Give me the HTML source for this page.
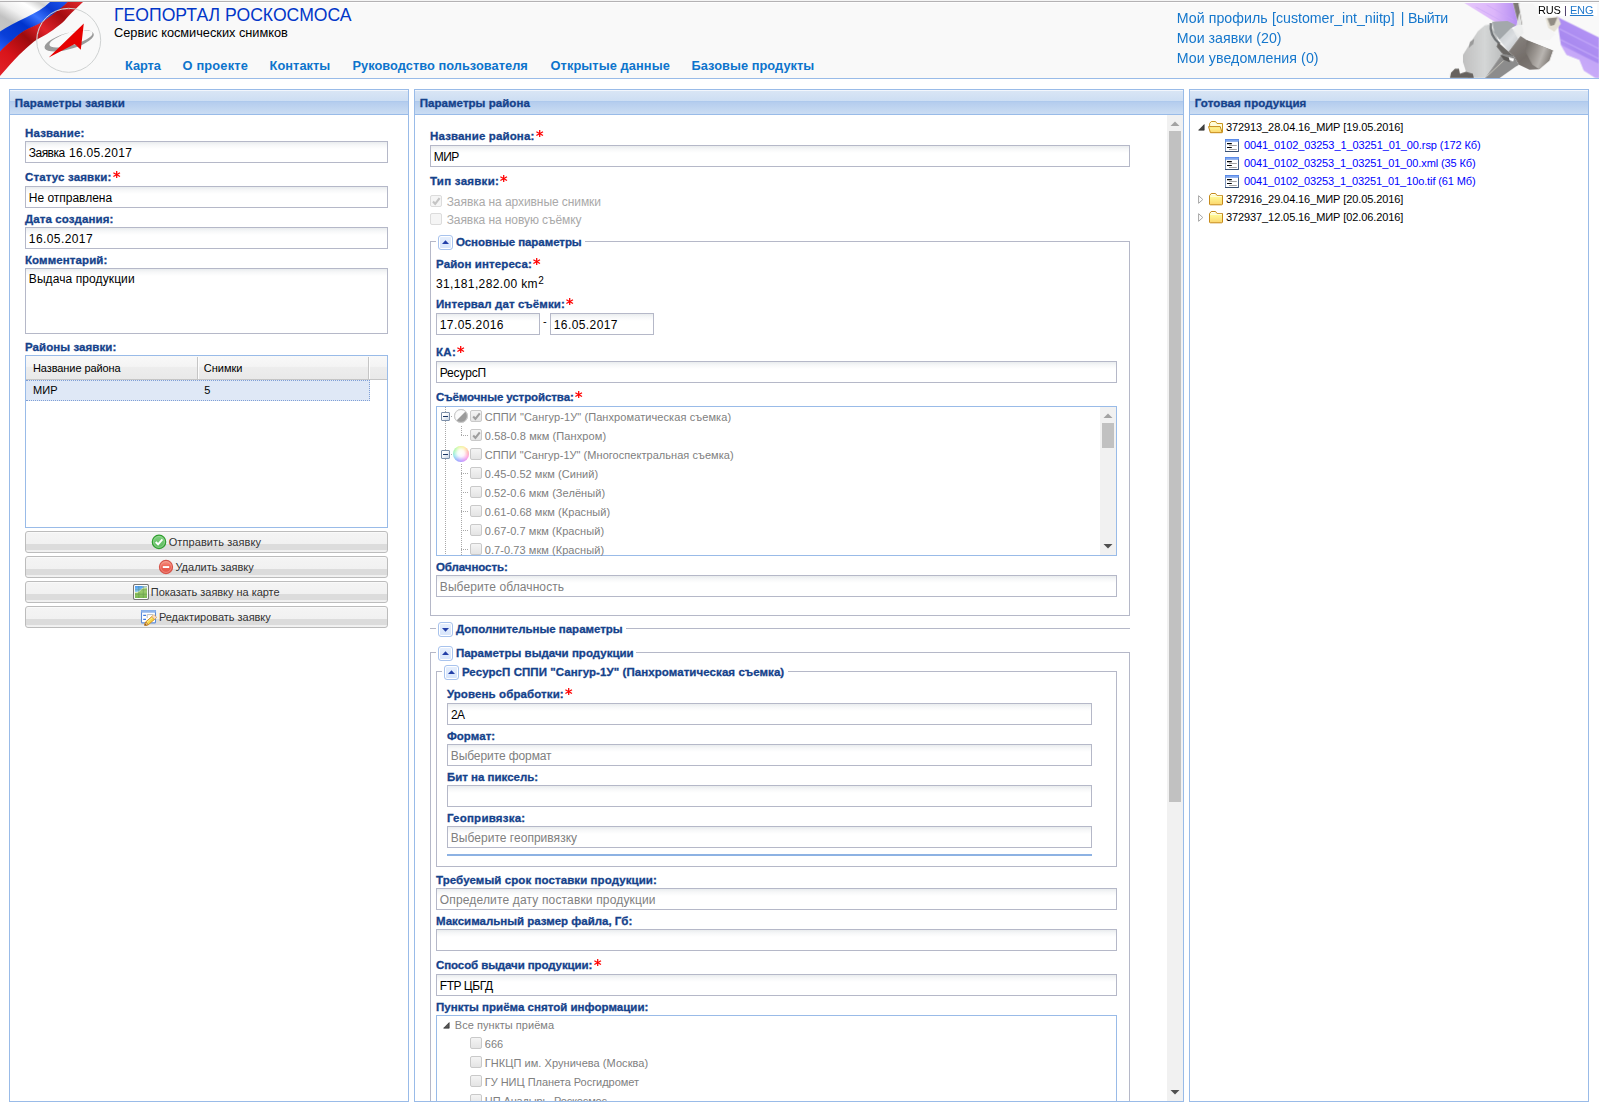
<!DOCTYPE html>
<html><head><meta charset="utf-8"><title>Геопортал Роскосмоса</title>
<style>
html,body{margin:0;padding:0;background:#fff;overflow:hidden}
body{width:1599px;height:1112px;position:relative;font-family:'Liberation Sans', sans-serif;}
div,svg{box-sizing:border-box}
.in{position:absolute;height:22px;border:1px solid #b5b8c8;background:linear-gradient(#e9ecee 0,#f6f7f8 3px,#fff 7px)}
.hd{position:absolute;height:25px;border:1px solid #99bbe8;border-bottom:none;background:linear-gradient(#dae6f5 0,#cddef3 45%,#abc7ec 46%,#b5cdee 52%,#cbddf3 100%);box-shadow:inset 0 1px 0 #f2f6fc}
.bd{position:absolute;border:1px solid #99bbe8;background:#fff}
.btn{position:absolute;height:22px;width:363px;left:25px;border:1px solid #bcbcbc;border-radius:3px;background:linear-gradient(#fafafa 0,#fafafa 1px,#f4f4f4 1px,#f1f1f1 12px,#dcdcdc 12px,#dcdcdc 18px,#efefef 18px,#f2f2f2 20px)}
.cb{position:absolute;width:12px;height:12px;border:1px solid #c9c9c9;border-radius:2px;background:linear-gradient(#f4f4f4,#e4e4e4)}
.tg{position:absolute;width:15px;height:15px;border:1px solid #a8c3ed;border-radius:3px;background:linear-gradient(#e6effd,#d7e5fb);box-shadow:inset 0 0 0 1px #fff}
</style></head><body>
<div style="position:absolute;left:0px;top:0px;width:1599px;height:78px;background:#f9f9f9"></div>
<div style="position:absolute;left:0px;top:0px;width:1599px;height:1px;background:#f5f5f5"></div>
<div style="position:absolute;left:0px;top:1px;width:1599px;height:1px;background:#b4b2b4"></div>
<div style="position:absolute;left:0px;top:2px;width:1599px;height:1px;background:#fefefe"></div>
<div style="position:absolute;left:0px;top:78px;width:1599px;height:1px;background:#99bbe8"></div>
<svg style="position:absolute;left:0;top:2px" width="112" height="76" viewBox="0 2 112 76">
<defs>
<linearGradient id="gw" x1="0" y1="1" x2="1" y2="0"><stop offset="0" stop-color="#c6c6c6"/><stop offset=".28" stop-color="#c2c2c2"/><stop offset=".5" stop-color="#f0f0f0"/><stop offset=".72" stop-color="#ffffff"/><stop offset=".88" stop-color="#d2d2d2"/><stop offset="1" stop-color="#ececec"/></linearGradient>
<linearGradient id="gb" x1="0" y1="1" x2="1" y2="0"><stop offset="0" stop-color="#2b62ff"/><stop offset=".2" stop-color="#0a3fd8"/><stop offset=".45" stop-color="#0033cc"/><stop offset=".62" stop-color="#3a74ff"/><stop offset=".8" stop-color="#0a3ad0"/><stop offset="1" stop-color="#1c55f0"/></linearGradient>
<linearGradient id="gr" x1="0" y1="1" x2="1" y2="0"><stop offset="0" stop-color="#e3222a"/><stop offset=".2" stop-color="#d8141a"/><stop offset=".42" stop-color="#9c0b0d"/><stop offset=".58" stop-color="#e0232a"/><stop offset=".78" stop-color="#a40c10"/><stop offset="1" stop-color="#e2262c"/></linearGradient>
<clipPath id="cc"><circle cx="68.7" cy="40.3" r="31.5"/></clipPath>
</defs>
<path d="M0,2 L50,2 C44,8 36,13 26,18 C16,23 7,27 0,32 Z" fill="url(#gw)"/>
<path d="M0,31.5 C7,26.5 16,22.5 26,17.5 C36,12.5 44,8 50,2 L68,2 C64,6 60,9.5 55,13 C50,17 45,21 40,23.7 C32,27.5 25,30 20,34 C15,38 10,42.5 6.5,45.5 C4,47.8 2,50 0,52 Z" fill="url(#gb)"/>
<path d="M0,51.5 C2,49.5 4,47.3 6.5,45 C10,42 15,37.5 20,33.5 C25,29.5 32,27 40,23.2 C45,20.5 50,16.5 55,12.5 C60,9 64,5.5 67.5,2 L83,2 C78,7 73,11 69,15.5 C66,19 63,22.5 59.5,25 C55,28.5 51,31.5 47,34 C42,37 38,38.5 34,41.5 C29,45.5 24,50 19,55 C13,61 7,68 0,76 Z" fill="url(#gr)"/>
<g clip-path="url(#cc)" opacity=".55"><path d="M36.5,44 C36,20 52,7 70,8.5" fill="none" stroke="#fff" stroke-width="1.6"/></g>
<circle cx="68.7" cy="40.3" r="32" fill="none" stroke="#cfd2d2" stroke-width="1"/>
<g transform="rotate(-16 68.7 40.3)">
<path d="M43.5,41.5 A25.5,8.2 0 1 0 94.5,40.5 A25.5,8.2 0 1 0 43.5,41.5 Z M49,39.2 A22.3,6.4 0 1 1 93.6,39.8 A22.3,6.4 0 1 1 49,39.2 Z" fill="#9a9a9a" fill-rule="evenodd"/>
</g>
<path d="M83.8,23.5 L80.8,49.8 L74.8,43.9 L48.7,57.4 Z" fill="#e60000"/>
</svg>
<div class="hd" style="left:9px;top:89px;width:400px"></div>
<div class="bd" style="left:9px;top:114px;width:400px;height:988px"></div>
<div class="hd" style="left:414px;top:89px;width:770px"></div>
<div class="bd" style="left:414px;top:114px;width:770px;height:988px"></div>
<div class="hd" style="left:1189px;top:89px;width:400px"></div>
<div class="bd" style="left:1189px;top:114px;width:400px;height:988px"></div>
<div class="in" style="left:25px;top:141px;width:363px;height:22px"></div>
<svg style="position:absolute;left:111.8px;top:169.8px" width="10" height="10" viewBox="111.8 169.8 10 10"><g stroke="#f00" stroke-width="1.25" stroke-linecap="butt"><line x1="116.5" y1="170.8" x2="116.5" y2="177.9"/><line x1="113.2" y1="172.5" x2="119.8" y2="176.3"/><line x1="113.2" y1="176.3" x2="119.8" y2="172.5"/></g></svg>
<div class="in" style="left:25px;top:186px;width:363px;height:22px"></div>
<div class="in" style="left:25px;top:227px;width:363px;height:22px"></div>
<div class="in" style="left:25px;top:268px;width:363px;height:66px"></div>
<div style="position:absolute;left:25px;top:355px;width:363px;height:173px;border:1px solid #99bbe8;background:#fff"></div>
<div style="position:absolute;left:26px;top:356px;width:361px;height:24px;background:linear-gradient(#f9f9f9 0,#f4f4f4 45%,#ededed 50%,#e9e9e9 100%);border-bottom:1px solid #c5c5c5"></div>
<div style="position:absolute;left:197px;top:357px;width:1px;height:22px;background:#c5c5c5"></div>
<div style="position:absolute;left:198px;top:357px;width:1px;height:22px;background:#fdfdfd"></div>
<div style="position:absolute;left:368px;top:357px;width:1px;height:22px;background:#c5c5c5"></div>
<div style="position:absolute;left:369px;top:357px;width:1px;height:22px;background:#fdfdfd"></div>
<div style="position:absolute;left:26px;top:380px;width:344px;height:21px;background:#dfe8f6;border-top:1px dotted #7f9fd6;border-bottom:1px dotted #7f9fd6;border-right:1px dotted #7f9fd6"></div>
<div class="btn" style="top:531px"></div>
<div class="btn" style="top:556px"></div>
<div class="btn" style="top:581px"></div>
<div class="btn" style="top:606px"></div>
<svg style="position:absolute;left:534.8px;top:128.8px" width="10" height="10" viewBox="534.8 128.8 10 10"><g stroke="#f00" stroke-width="1.25" stroke-linecap="butt"><line x1="539.5" y1="129.8" x2="539.5" y2="136.9"/><line x1="536.1999999999999" y1="131.5" x2="542.8" y2="135.3"/><line x1="536.1999999999999" y1="135.3" x2="542.8" y2="131.5"/></g></svg>
<div class="in" style="left:430px;top:145px;width:700px;height:22px"></div>
<svg style="position:absolute;left:499.3px;top:173.8px" width="10" height="10" viewBox="499.3 173.8 10 10"><g stroke="#f00" stroke-width="1.25" stroke-linecap="butt"><line x1="504.0" y1="174.8" x2="504.0" y2="181.9"/><line x1="500.7" y1="176.5" x2="507.3" y2="180.3"/><line x1="500.7" y1="180.3" x2="507.3" y2="176.5"/></g></svg>
<div class="cb" style="left:430px;top:195px;border-color:#dcdcdc;background:#f5f5f5"></div>
<svg style="position:absolute;left:432px;top:197px" width="9" height="9" viewBox="0 0 9 9"><path d="M1.0,4.6 L3.2,6.9 L7.6,1.2" fill="none" stroke="#c4c4c4" stroke-width="2.2"/></svg>
<div class="cb" style="left:430px;top:213px;border-color:#dcdcdc;background:#f5f5f5"></div>
<div style="position:absolute;left:430px;top:241px;width:700px;height:375px;border:1px solid #b5b8c8"></div>
<div style="position:absolute;left:436px;top:239px;width:149px;height:5px;background:#fff"></div>
<div class="tg" style="left:438px;top:235px"></div>
<svg style="position:absolute;left:442px;top:240px" width="7" height="4" viewBox="0 0 7 4"><path d="M0,4 L3.5,0.2 L7,4 Z" fill="#2340a8"/></svg>
<svg style="position:absolute;left:532.3px;top:256.8px" width="10" height="10" viewBox="532.3 256.8 10 10"><g stroke="#f00" stroke-width="1.25" stroke-linecap="butt"><line x1="537.0" y1="257.8" x2="537.0" y2="264.90000000000003"/><line x1="533.6999999999999" y1="259.50000000000006" x2="540.3" y2="263.3"/><line x1="533.6999999999999" y1="263.3" x2="540.3" y2="259.50000000000006"/></g></svg>
<svg style="position:absolute;left:565.3px;top:296.8px" width="10" height="10" viewBox="565.3 296.8 10 10"><g stroke="#f00" stroke-width="1.25" stroke-linecap="butt"><line x1="570.0" y1="297.8" x2="570.0" y2="304.90000000000003"/><line x1="566.6999999999999" y1="299.50000000000006" x2="573.3" y2="303.3"/><line x1="566.6999999999999" y1="303.3" x2="573.3" y2="299.50000000000006"/></g></svg>
<div class="in" style="left:436px;top:313px;width:104px;height:22px"></div>
<div class="in" style="left:550px;top:313px;width:104px;height:22px"></div>
<svg style="position:absolute;left:456.3px;top:344.8px" width="10" height="10" viewBox="456.3 344.8 10 10"><g stroke="#f00" stroke-width="1.25" stroke-linecap="butt"><line x1="461.0" y1="345.8" x2="461.0" y2="352.90000000000003"/><line x1="457.7" y1="347.50000000000006" x2="464.3" y2="351.3"/><line x1="457.7" y1="351.3" x2="464.3" y2="347.50000000000006"/></g></svg>
<div class="in" style="left:436px;top:361px;width:681px;height:22px"></div>
<svg style="position:absolute;left:574.3px;top:389.8px" width="10" height="10" viewBox="574.3 389.8 10 10"><g stroke="#f00" stroke-width="1.25" stroke-linecap="butt"><line x1="579.0" y1="390.8" x2="579.0" y2="397.90000000000003"/><line x1="575.6999999999999" y1="392.50000000000006" x2="582.3" y2="396.3"/><line x1="575.6999999999999" y1="396.3" x2="582.3" y2="392.50000000000006"/></g></svg>
<div style="position:absolute;left:436px;top:406px;width:681px;height:150px;border:1px solid #99bbe8;background:#fff"></div>
<div style="position:absolute;left:445px;top:407px;width:1px;height:148px;background:repeating-linear-gradient(to bottom,#a8a8a8 0,#a8a8a8 1px,transparent 1px,transparent 2px)"></div>
<div style="position:absolute;left:441px;top:412px;width:9px;height:9px;border:1px solid #7c8fa9;border-radius:1px;background:linear-gradient(135deg,#fff 30%,#c9d6e6)"></div>
<div style="position:absolute;left:443px;top:416px;width:5px;height:1px;background:#1c3664"></div>
<div style="position:absolute;left:451px;top:416px;width:2px;height:1px;background:repeating-linear-gradient(to right,#a8a8a8 0,#a8a8a8 1px,transparent 1px,transparent 2px)"></div>
<svg style="position:absolute;left:453px;top:408px" width="16" height="16" viewBox="0 0 16 16"><defs><clipPath id="pc"><circle cx="8" cy="8" r="6.3"/></clipPath></defs><circle cx="8" cy="8" r="6.6" fill="#fbfbfb" stroke="#c4c4c4" stroke-width="1"/><path d="M14.5,1.5 L14.5,14.5 L1.5,14.5 Z" fill="#9b9b9b" clip-path="url(#pc)"/><circle cx="8" cy="8" r="6.4" fill="none" stroke="#d2d2d2" stroke-width=".8"/></svg>
<div class="cb" style="left:470px;top:410px"></div>
<svg style="position:absolute;left:472px;top:412px" width="9" height="9" viewBox="0 0 9 9"><path d="M1.2,4.6 L3.4,6.9 L7.8,1.4" fill="none" stroke="#9e9e9e" stroke-width="2.1"/></svg>
<div style="position:absolute;left:461px;top:426px;width:1px;height:10px;background:repeating-linear-gradient(to bottom,#a8a8a8 0,#a8a8a8 1px,transparent 1px,transparent 2px)"></div>
<div style="position:absolute;left:461px;top:435px;width:7px;height:1px;background:repeating-linear-gradient(to right,#a8a8a8 0,#a8a8a8 1px,transparent 1px,transparent 2px)"></div>
<div class="cb" style="left:470px;top:429px"></div>
<svg style="position:absolute;left:472px;top:431px" width="9" height="9" viewBox="0 0 9 9"><path d="M1.2,4.6 L3.4,6.9 L7.8,1.4" fill="none" stroke="#9e9e9e" stroke-width="2.1"/></svg>
<div style="position:absolute;left:441px;top:450px;width:9px;height:9px;border:1px solid #7c8fa9;border-radius:1px;background:linear-gradient(135deg,#fff 30%,#c9d6e6)"></div>
<div style="position:absolute;left:443px;top:454px;width:5px;height:1px;background:#1c3664"></div>
<div style="position:absolute;left:451px;top:454px;width:2px;height:1px;background:repeating-linear-gradient(to right,#a8a8a8 0,#a8a8a8 1px,transparent 1px,transparent 2px)"></div>
<div style="position:absolute;left:453px;top:446px;width:16px;height:16px;border-radius:50%;background:conic-gradient(from 30deg,#ffe27a,#ff9a9a,#ff8fe0,#c08bff,#8fa0ff,#7fe0e8,#8ff59a,#d9f57a,#ffe27a)"></div>
<div style="position:absolute;left:453px;top:446px;width:16px;height:16px;border-radius:50%;background:radial-gradient(circle at 50% 45%,#fff 0,rgba(255,255,255,.9) 28%,rgba(255,255,255,.25) 62%,rgba(255,255,255,0) 78%)"></div>
<div class="cb" style="left:470px;top:448px"></div>
<div style="position:absolute;left:461px;top:464px;width:1px;height:91px;background:repeating-linear-gradient(to bottom,#a8a8a8 0,#a8a8a8 1px,transparent 1px,transparent 2px)"></div>
<div style="position:absolute;left:461px;top:473px;width:7px;height:1px;background:repeating-linear-gradient(to right,#a8a8a8 0,#a8a8a8 1px,transparent 1px,transparent 2px)"></div>
<div class="cb" style="left:470px;top:467px"></div>
<div style="position:absolute;left:461px;top:492px;width:7px;height:1px;background:repeating-linear-gradient(to right,#a8a8a8 0,#a8a8a8 1px,transparent 1px,transparent 2px)"></div>
<div class="cb" style="left:470px;top:486px"></div>
<div style="position:absolute;left:461px;top:511px;width:7px;height:1px;background:repeating-linear-gradient(to right,#a8a8a8 0,#a8a8a8 1px,transparent 1px,transparent 2px)"></div>
<div class="cb" style="left:470px;top:505px"></div>
<div style="position:absolute;left:461px;top:530px;width:7px;height:1px;background:repeating-linear-gradient(to right,#a8a8a8 0,#a8a8a8 1px,transparent 1px,transparent 2px)"></div>
<div class="cb" style="left:470px;top:524px"></div>
<div style="position:absolute;left:461px;top:549px;width:7px;height:1px;background:repeating-linear-gradient(to right,#a8a8a8 0,#a8a8a8 1px,transparent 1px,transparent 2px)"></div>
<div class="cb" style="left:470px;top:543px"></div>
<div style="position:absolute;left:437px;top:555px;width:663px;height:1px;background:#99bbe8"></div>
<div style="position:absolute;left:437px;top:556px;width:663px;height:8px;background:#fff"></div>
<div style="position:absolute;left:1100px;top:407px;width:16px;height:148px;background:#f1f1f1"></div>
<div style="position:absolute;left:1102px;top:423px;width:12px;height:25px;background:#c1c1c1"></div>
<svg style="position:absolute;left:1103px;top:413px" width="10" height="6" viewBox="0 0 10 6"><path d="M0.5,5 L5,0.5 L9.5,5 Z" fill="#a3a3a3"/></svg>
<svg style="position:absolute;left:1103px;top:543px" width="10" height="6" viewBox="0 0 10 6"><path d="M0.5,1 L9.5,1 L5,5.5 Z" fill="#505050"/></svg>
<div class="in" style="left:436px;top:575px;width:681px;height:22px"></div>
<div style="position:absolute;left:430px;top:628px;width:700px;height:1px;background:#b5b8c8"></div>
<div style="position:absolute;left:436px;top:626px;width:190px;height:5px;background:#fff"></div>
<div class="tg" style="left:438px;top:622px"></div>
<svg style="position:absolute;left:442px;top:628px" width="7" height="4" viewBox="0 0 7 4"><path d="M0,0 L7,0 L3.5,3.8 Z" fill="#2340a8"/></svg>
<div style="position:absolute;left:430px;top:652px;width:700px;height:460px;border:1px solid #b5b8c8;border-bottom:none"></div>
<div style="position:absolute;left:436px;top:650px;width:200px;height:5px;background:#fff"></div>
<div class="tg" style="left:438px;top:646px"></div>
<svg style="position:absolute;left:442px;top:651px" width="7" height="4" viewBox="0 0 7 4"><path d="M0,4 L3.5,0.2 L7,4 Z" fill="#2340a8"/></svg>
<div style="position:absolute;left:436px;top:671px;width:681px;height:196px;border:1px solid #b5b8c8"></div>
<div style="position:absolute;left:442px;top:669px;width:346px;height:5px;background:#fff"></div>
<div class="tg" style="left:444px;top:665px"></div>
<svg style="position:absolute;left:448px;top:670px" width="7" height="4" viewBox="0 0 7 4"><path d="M0,4 L3.5,0.2 L7,4 Z" fill="#2340a8"/></svg>
<svg style="position:absolute;left:564.1999999999999px;top:686.8px" width="10" height="10" viewBox="564.1999999999999 686.8 10 10"><g stroke="#f00" stroke-width="1.25" stroke-linecap="butt"><line x1="568.9" y1="687.8" x2="568.9" y2="694.9"/><line x1="565.5999999999999" y1="689.5" x2="572.1999999999999" y2="693.3"/><line x1="565.5999999999999" y1="693.3" x2="572.1999999999999" y2="689.5"/></g></svg>
<div class="in" style="left:447px;top:703px;width:645px;height:22px"></div>
<div class="in" style="left:447px;top:744px;width:645px;height:22px"></div>
<div class="in" style="left:447px;top:785px;width:645px;height:22px"></div>
<div class="in" style="left:447px;top:826px;width:645px;height:22px"></div>
<div style="position:absolute;left:447px;top:854px;width:645px;height:2px;background:#8db2e3"></div>
<div class="in" style="left:436px;top:888px;width:681px;height:22px"></div>
<div class="in" style="left:436px;top:929px;width:681px;height:22px"></div>
<svg style="position:absolute;left:592.8px;top:957.8px" width="10" height="10" viewBox="592.8 957.8 10 10"><g stroke="#f00" stroke-width="1.25" stroke-linecap="butt"><line x1="597.5" y1="958.8" x2="597.5" y2="965.9"/><line x1="594.1999999999999" y1="960.5" x2="600.8" y2="964.3"/><line x1="594.1999999999999" y1="964.3" x2="600.8" y2="960.5"/></g></svg>
<div class="in" style="left:436px;top:974px;width:681px;height:22px"></div>
<div style="position:absolute;left:436px;top:1015px;width:681px;height:97px;border:1px solid #99bbe8;border-bottom:none;background:#fff"></div>
<svg style="position:absolute;left:443px;top:1022.3px" width="7" height="7" viewBox="0 0 7 7"><path d="M6.2,0.6 L6.2,6.2 L0.6,6.2 Z" fill="#555" stroke="#222" stroke-width=".6"/></svg>
<div class="cb" style="left:470px;top:1037px"></div>
<div class="cb" style="left:470px;top:1056px"></div>
<div class="cb" style="left:470px;top:1075px"></div>
<div class="cb" style="left:470px;top:1094px"></div>
<div style="position:absolute;left:1167px;top:115px;width:16px;height:986px;background:#f1f1f1"></div>
<div style="position:absolute;left:1169px;top:131px;width:12px;height:671px;background:#c1c1c1"></div>
<svg style="position:absolute;left:1170px;top:121px" width="10" height="6" viewBox="0 0 10 6"><path d="M0.5,5 L5,0.5 L9.5,5 Z" fill="#a3a3a3"/></svg>
<svg style="position:absolute;left:1170px;top:1089px" width="10" height="6" viewBox="0 0 10 6"><path d="M0.5,1 L9.5,1 L5,5.5 Z" fill="#505050"/></svg>
<svg style="position:absolute;left:1198px;top:123.5px" width="7" height="7" viewBox="0 0 7 7"><path d="M6.2,0.6 L6.2,6.2 L0.6,6.2 Z" fill="#444" stroke="#222" stroke-width=".6"/></svg>
<svg style="position:absolute;left:1208px;top:120.5px" width="16" height="13" viewBox="0 0 16 13"><defs><linearGradient id="fo" x1="0" y1="0" x2="0" y2="1"><stop offset="0" stop-color="#fffb98"/><stop offset="1" stop-color="#fcd56c"/></linearGradient></defs><path d="M1.6,5.6 L1.6,2.4 L3.3,0.5 L7.6,0.5 L9,2.5 L14.5,2.5 L14.5,11 L2.6,11" fill="#fffdd8" stroke="#c9961f" stroke-width="1"/><path d="M0.5,5.6 L12.2,5.6 L14.2,11.7 L2.4,11.7 Z" fill="url(#fo)" stroke="#c58a1b" stroke-width="1" stroke-linejoin="round"/></svg>
<svg style="position:absolute;left:1225px;top:139px" width="14" height="13" viewBox="0 0 14 13"><rect x="0.5" y="0.5" width="13" height="12" fill="#fff" stroke="#7f95bb"/><rect x="0" y="0" width="14" height="2.6" fill="#4f83e6"/><rect x="0.6" y="0.8" width="12.8" height="1" fill="#8db1f3"/><path d="M0,12.5 L14,12.5" stroke="#3b5273" stroke-width="1"/><path d="M13.5,2.6 L13.5,13" stroke="#4c6386" stroke-width="1"/><path d="M2,4.6 L6.8,4.6 M2,8.5 L6.8,8.5" stroke="#000" stroke-width="1.1"/><path d="M4,6.5 L11.8,6.5 M4,10.5 L11.8,10.5" stroke="#9a9a9a" stroke-width=".9"/></svg>
<svg style="position:absolute;left:1225px;top:157px" width="14" height="13" viewBox="0 0 14 13"><rect x="0.5" y="0.5" width="13" height="12" fill="#fff" stroke="#7f95bb"/><rect x="0" y="0" width="14" height="2.6" fill="#4f83e6"/><rect x="0.6" y="0.8" width="12.8" height="1" fill="#8db1f3"/><path d="M0,12.5 L14,12.5" stroke="#3b5273" stroke-width="1"/><path d="M13.5,2.6 L13.5,13" stroke="#4c6386" stroke-width="1"/><path d="M2,4.6 L6.8,4.6 M2,8.5 L6.8,8.5" stroke="#000" stroke-width="1.1"/><path d="M4,6.5 L11.8,6.5 M4,10.5 L11.8,10.5" stroke="#9a9a9a" stroke-width=".9"/></svg>
<svg style="position:absolute;left:1225px;top:175px" width="14" height="13" viewBox="0 0 14 13"><rect x="0.5" y="0.5" width="13" height="12" fill="#fff" stroke="#7f95bb"/><rect x="0" y="0" width="14" height="2.6" fill="#4f83e6"/><rect x="0.6" y="0.8" width="12.8" height="1" fill="#8db1f3"/><path d="M0,12.5 L14,12.5" stroke="#3b5273" stroke-width="1"/><path d="M13.5,2.6 L13.5,13" stroke="#4c6386" stroke-width="1"/><path d="M2,4.6 L6.8,4.6 M2,8.5 L6.8,8.5" stroke="#000" stroke-width="1.1"/><path d="M4,6.5 L11.8,6.5 M4,10.5 L11.8,10.5" stroke="#9a9a9a" stroke-width=".9"/></svg>
<svg style="position:absolute;left:1198px;top:195px" width="6" height="9" viewBox="0 0 6 9"><path d="M0.6,0.7 L4.8,4.5 L0.6,8.3 Z" fill="#fff" stroke="#a6a6a6" stroke-width="1"/></svg>
<svg style="position:absolute;left:1209px;top:192.5px" width="15" height="13" viewBox="0 0 15 13"><defs><linearGradient id="fg1209192.5" x1="0" y1="0" x2="0" y2="1"><stop offset="0" stop-color="#fffde0"/><stop offset=".25" stop-color="#fffb98"/><stop offset="1" stop-color="#fcd56c"/></linearGradient></defs><path d="M0.5,11 L0.5,2.6 L2.2,0.5 L6.6,0.5 L8,2.5 L13.5,2.5 L13.5,11 Q13.5,11.8 12.6,11.8 L1.4,11.8 Q0.5,11.8 0.5,11 Z" fill="url(#fg1209192.5)" stroke="#c58a1b" stroke-width="1"/><path d="M2.4,1.6 L6.2,1.6" stroke="#fff" stroke-width="1"/><path d="M1.2,3.3 L12.8,3.3" stroke="#fffef2" stroke-width=".9"/></svg>
<svg style="position:absolute;left:1198px;top:213px" width="6" height="9" viewBox="0 0 6 9"><path d="M0.6,0.7 L4.8,4.5 L0.6,8.3 Z" fill="#fff" stroke="#a6a6a6" stroke-width="1"/></svg>
<svg style="position:absolute;left:1209px;top:210.5px" width="15" height="13" viewBox="0 0 15 13"><defs><linearGradient id="fg1209210.5" x1="0" y1="0" x2="0" y2="1"><stop offset="0" stop-color="#fffde0"/><stop offset=".25" stop-color="#fffb98"/><stop offset="1" stop-color="#fcd56c"/></linearGradient></defs><path d="M0.5,11 L0.5,2.6 L2.2,0.5 L6.6,0.5 L8,2.5 L13.5,2.5 L13.5,11 Q13.5,11.8 12.6,11.8 L1.4,11.8 Q0.5,11.8 0.5,11 Z" fill="url(#fg1209210.5)" stroke="#c58a1b" stroke-width="1"/><path d="M2.4,1.6 L6.2,1.6" stroke="#fff" stroke-width="1"/><path d="M1.2,3.3 L12.8,3.3" stroke="#fffef2" stroke-width=".9"/></svg>
<svg style="position:absolute;left:1440px;top:0px" width="159" height="78" viewBox="0 0 1599 784" preserveAspectRatio="none">
<defs>
<linearGradient id="p1" x1="0" y1="0" x2="1" y2="0"><stop offset="0" stop-color="#e6c8fc"/><stop offset=".55" stop-color="#dcb6fa"/><stop offset="1" stop-color="#b38cf2"/></linearGradient>
<linearGradient id="p2" x1="0" y1="1" x2=".6" y2="0"><stop offset="0" stop-color="#dcbdfb"/><stop offset=".3" stop-color="#c3a3f8"/><stop offset=".55" stop-color="#a98af0"/><stop offset="1" stop-color="#b595f6"/></linearGradient>
<linearGradient id="b1" x1="0" y1="0" x2="1" y2="0"><stop offset="0" stop-color="#c0c0c0"/><stop offset=".55" stop-color="#d4d6d6"/><stop offset="1" stop-color="#bcbebe"/></linearGradient>
<linearGradient id="b2" x1="0" y1="0" x2="1" y2="1"><stop offset="0" stop-color="#8c8783"/><stop offset=".5" stop-color="#736d69"/><stop offset="1" stop-color="#8a8581"/></linearGradient>
<linearGradient id="b3" x1="0" y1="0" x2="1" y2=".4"><stop offset="0" stop-color="#6b6662"/><stop offset=".45" stop-color="#9b9691"/><stop offset=".7" stop-color="#b9b5b1"/><stop offset="1" stop-color="#827d78"/></linearGradient>
<linearGradient id="b4" x1="0" y1="0" x2="1" y2="1"><stop offset="0" stop-color="#bfc4c8"/><stop offset=".5" stop-color="#dcdfe2"/><stop offset="1" stop-color="#b9bdc1"/></linearGradient>
<filter id="bl" x="-5%" y="-5%" width="110%" height="110%"><feGaussianBlur stdDeviation="5"/></filter>
</defs>
<g filter="url(#bl)">
<path d="M245,30 L735,30 L790,250 L700,285 L545,215 L400,125 Z" fill="url(#p1)"/>
<path d="M360,70 L690,250 M470,50 L740,200" stroke="#c9a4f6" stroke-width="10" opacity=".6"/>
<path d="M1172,166 L1600,376 L1600,784 L1562,782 L1447,709 L1403,601 L1273,550 L1215,449 L1186,246 Z" fill="url(#p2)"/>
<path d="M1200,290 L1600,490 M1215,400 L1600,590" stroke="#c9b0fa" stroke-width="12" opacity=".8"/>
<path d="M1215,449 L1600,640 L1600,784 L1562,782 L1447,709 L1403,601 L1273,550 Z" fill="#ceb0fa" opacity=".75"/>
<path d="M450,255 L495,247 L560,332 L628,535 L455,784 L282,784 L231,624 L231,550 L322,402 L382,312 Z" fill="url(#b1)"/>
<path d="M300,420 L345,390 L335,440 L290,480 Z" fill="#8f8f8f" opacity=".8"/>
<path d="M525,218 L680,212 L760,250 L720,282 L600,402 L545,330 Z" fill="#a3a8ab"/>
<path d="M512,232 C500,320 545,395 600,440" fill="none" stroke="#6c7073" stroke-width="22"/>
<path d="M600,402 L720,282 L810,362 L690,520 Z" fill="url(#b4)"/>
<path d="M735,30 L800,30 L830,250 L790,250 Z" fill="#7d7975"/>
<path d="M788,32 L933,32 L1157,347 L1099,405 L870,400 L810,362 L830,250 Z" fill="#f5f5f5"/>
<path d="M800,120 L840,330 L790,400 L735,300 L770,250 Z" fill="#eceded" opacity=".9"/>
<path d="M690,520 L810,362 L875,405 L1135,507 L1100,600 L998,695 L900,700 L795,651 L740,560 Z" fill="url(#b2)"/>
<path d="M875,405 L1135,507 L1100,610 L998,695 L930,650 L860,520 Z" fill="url(#b3)"/>
<path d="M628,535 L740,560 L795,651 L760,672 L600,784 L455,784 Z" fill="#8c8c8c"/><path d="M585,425 L690,520 L745,565 L628,540 L570,470 Z" fill="#6a6765"/>
<path d="M607,550 L702,585 L702,625 L640,600 Z" fill="#5c5a58"/>
<path d="M470,770 L640,610" stroke="#d8d4c8" stroke-width="10" opacity=".8"/>
<path d="M1060,180 L1190,170 L1215,240 L1150,320 L1090,280 Z" fill="#e4e0d4"/>
<path d="M1080,185 L1180,175 L1150,250 L1110,260 Z" fill="#77726a" opacity=".75"/>
<path d="M100,784 L110,730 L150,690 L190,690 L200,740 L260,720 L330,740 L340,784 Z" fill="#66625e"/>
<path d="M690,575 L745,590 L735,618 L700,605 Z" fill="#fff"/>
</g>
</svg>
<div style="position:absolute;left:1538px;top:4px;width:59px;height:12px;background:#fff"></div>
<div style="position:absolute;left:114.0px;top:3.0px;white-space:pre;font:normal 17.6px/24px 'Liberation Sans', sans-serif;color:#0236c8;letter-spacing:0.014px;">ГЕОПОРТАЛ РОСКОСМОСА</div>
<div style="position:absolute;left:114.0px;top:24.0px;white-space:pre;font:normal 12.8px/18px 'Liberation Sans', sans-serif;color:#000;letter-spacing:-0.030px;">Сервис космических снимков</div>
<div style="position:absolute;left:125.0px;top:57.0px;white-space:pre;font:bold 12.8px/18px 'Liberation Sans', sans-serif;color:#0d74cc;letter-spacing:-0.081px;">Карта</div>
<div style="position:absolute;left:182.5px;top:57.0px;white-space:pre;font:bold 12.8px/18px 'Liberation Sans', sans-serif;color:#0d74cc;letter-spacing:0.190px;">О проекте</div>
<div style="position:absolute;left:269.5px;top:57.0px;white-space:pre;font:bold 12.8px/18px 'Liberation Sans', sans-serif;color:#0d74cc;letter-spacing:0.065px;">Контакты</div>
<div style="position:absolute;left:352.5px;top:57.0px;white-space:pre;font:bold 12.8px/18px 'Liberation Sans', sans-serif;color:#0d74cc;letter-spacing:0.042px;">Руководство пользователя</div>
<div style="position:absolute;left:550.5px;top:57.0px;white-space:pre;font:bold 12.8px/18px 'Liberation Sans', sans-serif;color:#0d74cc;letter-spacing:0.094px;">Открытые данные</div>
<div style="position:absolute;left:691.5px;top:57.0px;white-space:pre;font:bold 12.8px/18px 'Liberation Sans', sans-serif;color:#0d74cc;letter-spacing:0.053px;">Базовые продукты</div>
<div style="position:absolute;left:1176.8px;top:9.0px;white-space:pre;font:normal 14.2px/19px 'Liberation Sans', sans-serif;color:#1577cc;letter-spacing:0.043px;">Мой профиль</div>
<div style="position:absolute;left:1272.1px;top:9.0px;white-space:pre;font:normal 14.2px/19px 'Liberation Sans', sans-serif;color:#1577cc;letter-spacing:-0.023px;">[customer_int_niitp]</div>
<div style="position:absolute;left:1400.7px;top:9.0px;white-space:pre;font:normal 14.2px/19px 'Liberation Sans', sans-serif;color:#1577cc;">|</div>
<div style="position:absolute;left:1408.1px;top:9.0px;white-space:pre;font:normal 14.2px/19px 'Liberation Sans', sans-serif;color:#1577cc;letter-spacing:-0.454px;">Выйти</div>
<div style="position:absolute;left:1176.8px;top:29.0px;white-space:pre;font:normal 14.2px/19px 'Liberation Sans', sans-serif;color:#1577cc;letter-spacing:0.010px;">Мои заявки (20)</div>
<div style="position:absolute;left:1176.8px;top:49.0px;white-space:pre;font:normal 14.2px/19px 'Liberation Sans', sans-serif;color:#1577cc;letter-spacing:0.066px;">Мои уведомления (0)</div>
<div style="position:absolute;left:14.8px;top:95.0px;white-space:pre;font:bold 11.5px/16px 'Liberation Sans', sans-serif;color:#15428b;letter-spacing:0.195px;-webkit-text-stroke:0.3px #15428b;">Параметры заявки</div>
<div style="position:absolute;left:419.8px;top:95.0px;white-space:pre;font:bold 11.5px/16px 'Liberation Sans', sans-serif;color:#15428b;letter-spacing:0.042px;-webkit-text-stroke:0.3px #15428b;">Параметры района</div>
<div style="position:absolute;left:1194.8px;top:95.0px;white-space:pre;font:bold 11.5px/16px 'Liberation Sans', sans-serif;color:#15428b;letter-spacing:0.112px;-webkit-text-stroke:0.3px #15428b;">Готовая продукция</div>
<div style="position:absolute;left:25.0px;top:125.0px;white-space:pre;font:bold 11.5px/16px 'Liberation Sans', sans-serif;color:#15428b;letter-spacing:0.147px;-webkit-text-stroke:0.3px #15428b;">Название:</div>
<div style="position:absolute;left:28.8px;top:145.0px;white-space:pre;font:normal 12px/17px 'Liberation Sans', sans-serif;color:#000;letter-spacing:-0.537px;">Заявка</div>
<div style="position:absolute;left:68.9px;top:145.0px;white-space:pre;font:normal 12px/17px 'Liberation Sans', sans-serif;color:#000;letter-spacing:0.337px;">16.05.2017</div>
<div style="position:absolute;left:25.0px;top:169.0px;white-space:pre;font:bold 11.5px/16px 'Liberation Sans', sans-serif;color:#15428b;letter-spacing:0.149px;-webkit-text-stroke:0.3px #15428b;">Статус заявки:</div>
<div style="position:absolute;left:28.8px;top:190.0px;white-space:pre;font:normal 12px/17px 'Liberation Sans', sans-serif;color:#000;letter-spacing:-0.018px;">Не отправлена</div>
<div style="position:absolute;left:25.0px;top:211.0px;white-space:pre;font:bold 11.5px/16px 'Liberation Sans', sans-serif;color:#15428b;letter-spacing:0.095px;-webkit-text-stroke:0.3px #15428b;">Дата создания:</div>
<div style="position:absolute;left:28.8px;top:231.0px;white-space:pre;font:normal 12px/17px 'Liberation Sans', sans-serif;color:#000;letter-spacing:0.415px;">16.05.2017</div>
<div style="position:absolute;left:25.0px;top:252.0px;white-space:pre;font:bold 11.5px/16px 'Liberation Sans', sans-serif;color:#15428b;letter-spacing:0.093px;-webkit-text-stroke:0.3px #15428b;">Комментарий:</div>
<div style="position:absolute;left:28.8px;top:271.0px;white-space:pre;font:normal 12px/17px 'Liberation Sans', sans-serif;color:#000;letter-spacing:0.092px;">Выдача продукции</div>
<div style="position:absolute;left:25.0px;top:339.0px;white-space:pre;font:bold 11.5px/16px 'Liberation Sans', sans-serif;color:#15428b;letter-spacing:0.071px;-webkit-text-stroke:0.3px #15428b;">Районы заявки:</div>
<div style="position:absolute;left:32.9px;top:361.0px;white-space:pre;font:normal 11px/15px 'Liberation Sans', sans-serif;color:#000;letter-spacing:-0.079px;">Название района</div>
<div style="position:absolute;left:203.7px;top:361.0px;white-space:pre;font:normal 11px/15px 'Liberation Sans', sans-serif;color:#000;letter-spacing:0.022px;">Снимки</div>
<div style="position:absolute;left:32.9px;top:383.0px;white-space:pre;font:normal 11px/15px 'Liberation Sans', sans-serif;color:#000;letter-spacing:0.097px;">МИР</div>
<div style="position:absolute;left:204.2px;top:383.0px;white-space:pre;font:normal 11px/15px 'Liberation Sans', sans-serif;color:#000;">5</div>
<div style="position:absolute;left:168.7px;top:535.0px;white-space:pre;font:normal 11px/15px 'Liberation Sans', sans-serif;color:#333;letter-spacing:0.087px;">Отправить заявку</div>
<div style="position:absolute;left:175.5px;top:560.0px;white-space:pre;font:normal 11px/15px 'Liberation Sans', sans-serif;color:#333;letter-spacing:-0.012px;">Удалить заявку</div>
<div style="position:absolute;left:150.8px;top:585.0px;white-space:pre;font:normal 11px/15px 'Liberation Sans', sans-serif;color:#333;letter-spacing:-0.035px;">Показать заявку на карте</div>
<div style="position:absolute;left:158.9px;top:610.0px;white-space:pre;font:normal 11px/15px 'Liberation Sans', sans-serif;color:#333;letter-spacing:-0.029px;">Редактировать заявку</div>
<div style="position:absolute;left:430.0px;top:128.0px;white-space:pre;font:bold 11.5px/16px 'Liberation Sans', sans-serif;color:#15428b;letter-spacing:0.142px;-webkit-text-stroke:0.3px #15428b;">Название района:</div>
<div style="position:absolute;left:433.8px;top:149.0px;white-space:pre;font:normal 12px/17px 'Liberation Sans', sans-serif;color:#000;letter-spacing:-0.600px;">МИР</div>
<div style="position:absolute;left:430.0px;top:173.0px;white-space:pre;font:bold 11.5px/16px 'Liberation Sans', sans-serif;color:#15428b;letter-spacing:0.260px;-webkit-text-stroke:0.3px #15428b;">Тип заявки:</div>
<div style="position:absolute;left:446.7px;top:194.0px;white-space:pre;font:normal 12px/17px 'Liberation Sans', sans-serif;color:#a9a9a9;letter-spacing:-0.073px;">Заявка на архивные снимки</div>
<div style="position:absolute;left:446.7px;top:212.0px;white-space:pre;font:normal 12px/17px 'Liberation Sans', sans-serif;color:#a9a9a9;letter-spacing:-0.082px;">Заявка на новую съёмку</div>
<div style="position:absolute;left:455.9px;top:234.0px;white-space:pre;font:bold 11.5px/16px 'Liberation Sans', sans-serif;color:#15428b;letter-spacing:-0.055px;-webkit-text-stroke:0.3px #15428b;">Основные параметры</div>
<div style="position:absolute;left:436.0px;top:256.0px;white-space:pre;font:bold 11.5px/16px 'Liberation Sans', sans-serif;color:#15428b;letter-spacing:0.112px;-webkit-text-stroke:0.3px #15428b;">Район интереса:</div>
<div style="position:absolute;left:436.0px;top:276.0px;white-space:pre;font:normal 12px/17px 'Liberation Sans', sans-serif;color:#000;letter-spacing:0.368px;">31,181,282.00 km</div>
<div style="position:absolute;left:538.3px;top:274.0px;white-space:pre;font:normal 10px/14px 'Liberation Sans', sans-serif;color:#000;">2</div>
<div style="position:absolute;left:436.0px;top:296.0px;white-space:pre;font:bold 11.5px/16px 'Liberation Sans', sans-serif;color:#15428b;letter-spacing:0.105px;-webkit-text-stroke:0.3px #15428b;">Интервал дат съёмки:</div>
<div style="position:absolute;left:439.8px;top:317.0px;white-space:pre;font:normal 12px/17px 'Liberation Sans', sans-serif;color:#000;letter-spacing:0.404px;">17.05.2016</div>
<div style="position:absolute;left:543.1px;top:313.5px;white-space:pre;font:normal 11px/15px 'Liberation Sans', sans-serif;color:#000;">-</div>
<div style="position:absolute;left:553.8px;top:317.0px;white-space:pre;font:normal 12px/17px 'Liberation Sans', sans-serif;color:#000;letter-spacing:0.404px;">16.05.2017</div>
<div style="position:absolute;left:436.0px;top:344.0px;white-space:pre;font:bold 11.5px/16px 'Liberation Sans', sans-serif;color:#15428b;letter-spacing:0.322px;-webkit-text-stroke:0.3px #15428b;">КА:</div>
<div style="position:absolute;left:439.8px;top:365.0px;white-space:pre;font:normal 12px/17px 'Liberation Sans', sans-serif;color:#000;letter-spacing:-0.171px;">РесурсП</div>
<div style="position:absolute;left:436.0px;top:389.0px;white-space:pre;font:bold 11.5px/16px 'Liberation Sans', sans-serif;color:#15428b;letter-spacing:-0.092px;-webkit-text-stroke:0.3px #15428b;">Съёмочные устройства:</div>
<div style="position:absolute;left:484.8px;top:410.0px;white-space:pre;font:normal 11px/15px 'Liberation Sans', sans-serif;color:#808080;letter-spacing:0.088px;">СППИ &quot;Сангур-1У&quot; (Панхроматическая съемка)</div>
<div style="position:absolute;left:484.8px;top:429.0px;white-space:pre;font:normal 11px/15px 'Liberation Sans', sans-serif;color:#808080;letter-spacing:0.103px;">0.58-0.8 мкм (Панхром)</div>
<div style="position:absolute;left:484.8px;top:448.0px;white-space:pre;font:normal 11px/15px 'Liberation Sans', sans-serif;color:#808080;letter-spacing:0.041px;">СППИ &quot;Сангур-1У&quot; (Многоспектральная съемка)</div>
<div style="position:absolute;left:484.8px;top:467.0px;white-space:pre;font:normal 11px/15px 'Liberation Sans', sans-serif;color:#808080;letter-spacing:0.049px;">0.45-0.52 мкм (Синий)</div>
<div style="position:absolute;left:484.8px;top:486.0px;white-space:pre;font:normal 11px/15px 'Liberation Sans', sans-serif;color:#808080;letter-spacing:0.071px;">0.52-0.6 мкм (Зелёный)</div>
<div style="position:absolute;left:484.8px;top:505.0px;white-space:pre;font:normal 11px/15px 'Liberation Sans', sans-serif;color:#808080;letter-spacing:0.053px;">0.61-0.68 мкм (Красный)</div>
<div style="position:absolute;left:484.8px;top:524.0px;white-space:pre;font:normal 11px/15px 'Liberation Sans', sans-serif;color:#808080;letter-spacing:0.061px;">0.67-0.7 мкм (Красный)</div>
<div style="position:absolute;left:484.8px;top:543.0px;white-space:pre;font:normal 11px/15px 'Liberation Sans', sans-serif;color:#808080;letter-spacing:0.061px;">0.7-0.73 мкм (Красный)</div>
<div style="position:absolute;left:436.0px;top:559.0px;white-space:pre;font:bold 11.5px/16px 'Liberation Sans', sans-serif;color:#15428b;letter-spacing:-0.081px;-webkit-text-stroke:0.3px #15428b;">Облачность:</div>
<div style="position:absolute;left:439.8px;top:579.0px;white-space:pre;font:normal 12px/17px 'Liberation Sans', sans-serif;color:#808080;letter-spacing:0.099px;">Выберите облачность</div>
<div style="position:absolute;left:455.9px;top:621.0px;white-space:pre;font:bold 11.5px/16px 'Liberation Sans', sans-serif;color:#15428b;letter-spacing:-0.014px;-webkit-text-stroke:0.3px #15428b;">Дополнительные параметры</div>
<div style="position:absolute;left:455.9px;top:645.0px;white-space:pre;font:bold 11.5px/16px 'Liberation Sans', sans-serif;color:#15428b;letter-spacing:0.016px;-webkit-text-stroke:0.3px #15428b;">Параметры выдачи продукции</div>
<div style="position:absolute;left:461.9px;top:664.0px;white-space:pre;font:bold 11.5px/16px 'Liberation Sans', sans-serif;color:#15428b;letter-spacing:0.074px;-webkit-text-stroke:0.3px #15428b;">РесурсП СППИ &quot;Сангур-1У&quot; (Панхроматическая съемка)</div>
<div style="position:absolute;left:446.9px;top:686.0px;white-space:pre;font:bold 11.5px/16px 'Liberation Sans', sans-serif;color:#15428b;letter-spacing:0.108px;-webkit-text-stroke:0.3px #15428b;">Уровень обработки:</div>
<div style="position:absolute;left:451.0px;top:707.0px;white-space:pre;font:normal 12px/17px 'Liberation Sans', sans-serif;color:#000;letter-spacing:-0.600px;">2A</div>
<div style="position:absolute;left:446.9px;top:728.0px;white-space:pre;font:bold 11.5px/16px 'Liberation Sans', sans-serif;color:#15428b;letter-spacing:0.060px;-webkit-text-stroke:0.3px #15428b;">Формат:</div>
<div style="position:absolute;left:450.8px;top:748.0px;white-space:pre;font:normal 12px/17px 'Liberation Sans', sans-serif;color:#808080;letter-spacing:-0.098px;">Выберите формат</div>
<div style="position:absolute;left:446.9px;top:769.0px;white-space:pre;font:bold 11.5px/16px 'Liberation Sans', sans-serif;color:#15428b;letter-spacing:-0.002px;-webkit-text-stroke:0.3px #15428b;">Бит на пиксель:</div>
<div style="position:absolute;left:446.9px;top:810.0px;white-space:pre;font:bold 11.5px/16px 'Liberation Sans', sans-serif;color:#15428b;letter-spacing:0.233px;-webkit-text-stroke:0.3px #15428b;">Геопривязка:</div>
<div style="position:absolute;left:450.8px;top:830.0px;white-space:pre;font:normal 12px/17px 'Liberation Sans', sans-serif;color:#808080;letter-spacing:0.029px;">Выберите геопривязку</div>
<div style="position:absolute;left:436.0px;top:872.0px;white-space:pre;font:bold 11.5px/16px 'Liberation Sans', sans-serif;color:#15428b;letter-spacing:0.082px;-webkit-text-stroke:0.3px #15428b;">Требуемый срок поставки продукции:</div>
<div style="position:absolute;left:439.8px;top:892.0px;white-space:pre;font:normal 12px/17px 'Liberation Sans', sans-serif;color:#808080;letter-spacing:0.156px;">Определите дату поставки продукции</div>
<div style="position:absolute;left:436.0px;top:913.0px;white-space:pre;font:bold 11.5px/16px 'Liberation Sans', sans-serif;color:#15428b;letter-spacing:-0.008px;-webkit-text-stroke:0.3px #15428b;">Максимальный размер файла, Гб:</div>
<div style="position:absolute;left:436.0px;top:957.0px;white-space:pre;font:bold 11.5px/16px 'Liberation Sans', sans-serif;color:#15428b;letter-spacing:-0.098px;-webkit-text-stroke:0.3px #15428b;">Способ выдачи продукции:</div>
<div style="position:absolute;left:439.8px;top:978.0px;white-space:pre;font:normal 12px/17px 'Liberation Sans', sans-serif;color:#000;letter-spacing:-0.437px;">FTP ЦБГД</div>
<div style="position:absolute;left:436.0px;top:999.0px;white-space:pre;font:bold 11.5px/16px 'Liberation Sans', sans-serif;color:#15428b;letter-spacing:0.015px;-webkit-text-stroke:0.3px #15428b;">Пункты приёма снятой информации:</div>
<div style="position:absolute;left:454.8px;top:1018.0px;white-space:pre;font:normal 11px/15px 'Liberation Sans', sans-serif;color:#808080;letter-spacing:0.050px;">Все пункты приёма</div>
<div style="position:absolute;left:484.8px;top:1037.0px;white-space:pre;font:normal 11px/15px 'Liberation Sans', sans-serif;color:#808080;letter-spacing:-0.030px;">666</div>
<div style="position:absolute;left:484.8px;top:1056.0px;white-space:pre;font:normal 11px/15px 'Liberation Sans', sans-serif;color:#808080;letter-spacing:0.052px;">ГНКЦП им. Хруничева (Москва)</div>
<div style="position:absolute;left:484.8px;top:1075.0px;white-space:pre;font:normal 11px/15px 'Liberation Sans', sans-serif;color:#808080;letter-spacing:-0.030px;">ГУ НИЦ Планета Росгидромет</div>
<div style="position:absolute;left:484.8px;top:1094.0px;white-space:pre;font:normal 11px/15px 'Liberation Sans', sans-serif;color:#808080;letter-spacing:-0.141px;">ЦП Анадырь, Роскосмос</div>
<div style="position:absolute;left:1226.0px;top:120.0px;white-space:pre;font:normal 11px/15px 'Liberation Sans', sans-serif;color:#000;letter-spacing:-0.100px;">372913_28.04.16_МИР [19.05.2016]</div>
<div style="position:absolute;left:1243.9px;top:138.0px;white-space:pre;font:normal 11px/15px 'Liberation Sans', sans-serif;color:#0000ff;letter-spacing:-0.084px;">0041_0102_03253_1_03251_01_00.rsp (172 Кб)</div>
<div style="position:absolute;left:1243.9px;top:156.0px;white-space:pre;font:normal 11px/15px 'Liberation Sans', sans-serif;color:#0000ff;letter-spacing:-0.104px;">0041_0102_03253_1_03251_01_00.xml (35 Кб)</div>
<div style="position:absolute;left:1243.9px;top:174.0px;white-space:pre;font:normal 11px/15px 'Liberation Sans', sans-serif;color:#0000ff;letter-spacing:-0.109px;">0041_0102_03253_1_03251_01_10o.tif (61 Мб)</div>
<div style="position:absolute;left:1226.0px;top:192.0px;white-space:pre;font:normal 11px/15px 'Liberation Sans', sans-serif;color:#000;letter-spacing:-0.100px;">372916_29.04.16_МИР [20.05.2016]</div>
<div style="position:absolute;left:1226.0px;top:210.0px;white-space:pre;font:normal 11px/15px 'Liberation Sans', sans-serif;color:#000;letter-spacing:-0.100px;">372937_12.05.16_МИР [02.06.2016]</div>
<div style="position:absolute;left:1538.1px;top:3.0px;white-space:pre;font:normal 11px/15px 'Liberation Sans', sans-serif;color:#000;letter-spacing:-0.217px;">RUS</div>
<div style="position:absolute;left:1564.1px;top:3.0px;white-space:pre;font:normal 11px/15px 'Liberation Sans', sans-serif;color:#3a2a5a;">|</div>
<div style="position:absolute;left:1569.9px;top:3.0px;white-space:pre;font:normal 11px/15px 'Liberation Sans', sans-serif;color:#1f78cc;letter-spacing:-0.122px;text-decoration:underline;">ENG</div>
<div style="position:absolute;left:410px;top:1101px;width:778px;height:11px;background:#fff"></div>
<div style="position:absolute;left:414px;top:1101px;width:770px;height:1px;background:#99bbe8"></div>
<svg style="position:absolute;left:151px;top:534px" width="16" height="16" viewBox="0 0 16 16"><defs><linearGradient id="gi" x1="0" y1="0" x2="0" y2="1"><stop offset="0" stop-color="#7fd07f"/><stop offset="1" stop-color="#5cb85c"/></linearGradient></defs><circle cx="8" cy="7.9" r="6.7" fill="url(#gi)" stroke="#2f9d2f" stroke-width="1.2"/><circle cx="8" cy="7.9" r="5.5" fill="none" stroke="#a9e0a9" stroke-width=".5"/><path d="M4.7,8 L7.1,10.3 L11.4,5.4" fill="none" stroke="#fff" stroke-width="1.9"/></svg>
<svg style="position:absolute;left:158px;top:559px" width="16" height="16" viewBox="0 0 16 16"><defs><linearGradient id="ri" x1="0" y1="0" x2="0" y2="1"><stop offset="0" stop-color="#f59a88"/><stop offset=".5" stop-color="#ec5f50"/><stop offset="1" stop-color="#e2574c"/></linearGradient></defs><circle cx="8" cy="8" r="6.6" fill="url(#ri)" stroke="#d6544a" stroke-width="1.1"/><circle cx="8" cy="8" r="5.4" fill="none" stroke="#f7b3a8" stroke-width=".5"/><rect x="4.8" y="7.1" width="6.4" height="1.9" fill="#fff"/></svg>
<svg style="position:absolute;left:133px;top:584px" width="16" height="16" viewBox="0 0 16 16"><defs><linearGradient id="sk" x1="0" y1="0" x2="0" y2="1"><stop offset="0" stop-color="#4c9bf0"/><stop offset=".6" stop-color="#a5dbf8"/><stop offset="1" stop-color="#a5dbf8"/></linearGradient><linearGradient id="gn" x1="0" y1="0" x2="0" y2="1"><stop offset="0" stop-color="#a8d276"/><stop offset="1" stop-color="#7db955"/></linearGradient></defs><rect x="0.5" y="0.5" width="15" height="15" rx="1.6" fill="#fff" stroke="#777" stroke-width="1.1"/><rect x="2" y="2" width="12" height="12" fill="url(#sk)"/><path d="M2,8.6 C4.6,9 6,7.8 7.6,6.2 C9,4.8 10.2,3.9 14,3.7 L14,14 L2,14 Z" fill="url(#gn)"/><path d="M2,8.5 C4.6,8.9 6,7.7 7.6,6.1 C9,4.7 10.2,3.8 14,3.6" fill="none" stroke="#eef2b8" stroke-width=".9"/><path d="M9.6,2 L14,2 L14,3.6 L9.6,3.6Z" fill="#c6d9c0" opacity=".7"/><path d="M5.8,2 L5.8,14 M10.3,2 L10.3,14 M2,5.8 L14,5.8 M2,10.2 L14,10.2" stroke="#4a7a3a" stroke-width=".6" opacity=".55"/></svg>
<svg style="position:absolute;left:140px;top:609px" width="18" height="17" viewBox="0 0 18 17"><rect x="1.5" y="1.5" width="14" height="12.4" rx="1" fill="#fff" stroke="#5b8bd8" stroke-width="1.1"/><rect x="1" y="1" width="15" height="2.6" fill="#79a5e6"/><rect x="1.6" y="1.6" width="13.8" height=".9" fill="#a9c6f0"/><path d="M3.2,6.4 L6,6.4 M3.2,10.4 L6,10.4" stroke="#3f7be0" stroke-width="1.2"/><path d="M7.2,9 L7.2,5.6 L13,5.6" fill="none" stroke="#b5b5b5" stroke-width=".9"/><g transform="rotate(-41 5.2 15.9)"><path d="M5.2,15 L7.8,14 L17.6,14 Q18.6,14 18.6,15 L18.6,16.8 Q18.6,17.8 17.6,17.8 L7.8,17.8 L5.2,16.8 Z" fill="#f6d545" stroke="#cf8a22" stroke-width=".9"/><path d="M8,15 L15.8,15" stroke="#fff3a8" stroke-width=".8"/><rect x="15.9" y="14.1" width="2.6" height="3.6" fill="#f7dccc"/><path d="M15.8,14 L15.8,17.8" stroke="#d99a5a" stroke-width=".7"/><path d="M4.4,15.9 L7.7,14.1 L7.7,17.7 Z" fill="#e9c48c" stroke="#b5701a" stroke-width=".6"/><path d="M4.2,15.9 L5.8,15.1 L5.8,16.7 Z" fill="#6a3a0c"/></g></svg>
</body></html>
